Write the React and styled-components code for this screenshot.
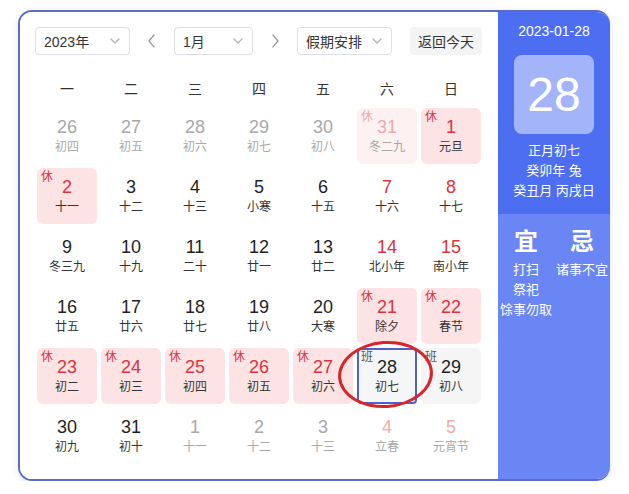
import React from 'react';
import styled, { createGlobalStyle } from 'styled-components';

const GlobalStyle = createGlobalStyle`
  body {
    margin: 0;
    background: #ffffff;
    font-family: 'Liberation Sans', 'Noto Sans CJK SC', sans-serif;
  }
`;

const Page = styled.div`
  padding: 10px 0 0 18px;
`;

const Card = styled.div`
  display: flex;
  width: 592px;
  height: 471px;
  box-sizing: border-box;
  border: 2px solid #5a6cc6;
  border-right: none;
  border-radius: 14px;
  overflow: hidden;
  box-shadow: 0 2px 6px rgba(90, 108, 198, 0.18);
`;

const Main = styled.div`
  width: 478px;
  box-sizing: border-box;
  padding: 15px 17px;
  background: #fff;
`;

const Toolbar = styled.div`
  display: flex;
  align-items: center;
  height: 28px;
  margin: 0 -1px 0 -2px;
`;

const Select = styled.div`
  display: flex;
  align-items: center;
  justify-content: space-between;
  width: ${p => p.$w}px;
  height: 28px;
  box-sizing: border-box;
  padding: 0 8px;
  border: 1px solid #dcdfe6;
  border-radius: 4px;
  font-size: 14px;
  color: #333;
`;

const Arrow = styled.div`
  display: flex;
  align-items: center;
  justify-content: center;
  width: 44px;
  color: #999;
`;

const TodayButton = styled.div`
  margin-left: auto;
  height: 28px;
  padding: 0 8px;
  display: flex;
  align-items: center;
  background: #f4f4f5;
  border-radius: 4px;
  font-size: 14px;
  color: #333;
`;

const Weekdays = styled.div`
  display: grid;
  grid-template-columns: repeat(7, 60px);
  column-gap: 4px;
  margin-top: 20px;
  height: 26px;
  align-items: center;
`;

const Weekday = styled.div`
  text-align: center;
  font-size: 14px;
  color: #333;
`;

const Grid = styled.div`
  display: grid;
  grid-template-columns: repeat(7, 60px);
  grid-auto-rows: 56px;
  gap: 4px;
  margin-top: 7px;
`;

const Cell = styled.div`
  position: relative;
  z-index: ${p => (p.$selected ? 2 : 0)};
  display: flex;
  flex-direction: column;
  align-items: center;
  justify-content: center;
  gap: 2px;
  box-sizing: border-box;
  background: ${p => p.$bg};
  border: ${p => (p.$selected ? '2px solid #4d63c9' : 'none')};
  border-radius: ${p => (p.$selected ? '4px' : '6px')};
`;

const Num = styled.div`
  font-size: 18px;
  line-height: 20px;
  color: ${p => p.$color};
`;

const Lunar = styled.div`
  font-size: 12px;
  line-height: 16px;
  color: ${p => p.$color};
`;

const Tag = styled.span`
  position: absolute;
  left: ${p => (p.$selected ? 2 : 4)}px;
  top: ${p => (p.$selected ? 0 : 2)}px;
  font-size: 12px;
  line-height: 14px;
  color: ${p => p.$color};
`;

const Ring = styled.span`
  position: absolute;
  left: -21px;
  top: -9px;
  width: 95px;
  height: 67px;
  box-sizing: border-box;
  border: 3px solid #d8252b;
  border-radius: 50%;
  transform: rotate(-4deg);
  pointer-events: none;
`;

const Panel = styled.div`
  width: 112px;
  display: flex;
  flex-direction: column;
  color: #fff;
`;

const PanelTop = styled.div`
  background: #4e6ef2;
  height: 202px;
  display: flex;
  flex-direction: column;
  align-items: center;
  padding-top: 10px;
  box-sizing: border-box;
`;

const DateText = styled.div`
  font-size: 14px;
  line-height: 18px;
`;

const DayBox = styled.div`
  margin-top: 15px;
  width: 80px;
  height: 79px;
  border-radius: 8px;
  background: #a3b4f8;
  display: flex;
  align-items: center;
  justify-content: center;
  font-size: 48px;
`;

const LunarLines = styled.div`
  margin-top: 7px;
  text-align: center;
  font-size: 13px;
  line-height: 20px;
`;

const PanelBottom = styled.div`
  flex: 1;
  background: #6a86f4;
  display: grid;
  grid-template-columns: 56px 56px;
  align-content: start;
  padding-top: 12px;
`;

const Column = styled.div`
  display: flex;
  flex-direction: column;
  align-items: center;
  font-size: 13px;
  line-height: 20px;
  white-space: nowrap;
`;

const Big = styled.div`
  font-size: 24px;
  line-height: 32px;
  font-weight: bold;
  margin-bottom: 2px;
`;

const Chevron = ({ size = 12, dir = 'down', color = '#b0b3b8' }) => {
  const d = {
    down: 'M2 4 L6 8 L10 4',
    left: 'M8 2 L3 8 L8 14',
    right: 'M4 2 L9 8 L4 14',
  }[dir];
  const h = dir === 'down' ? 12 : 16;
  return (
    <svg width={size} height={dir === 'down' ? size : size * 1.33} viewBox={`0 0 12 ${h}`} fill="none">
      <path d={d} stroke={color} strokeWidth="1.3" strokeLinecap="round" strokeLinejoin="round" />
    </svg>
  );
};

// kind: n normal, o other month, w weekend, h holiday, oh other-month holiday, ow other-month weekend, b work day
const days = [
  [26, '初四', 'o'], [27, '初五', 'o'], [28, '初六', 'o'], [29, '初七', 'o'], [30, '初八', 'o'], [31, '冬二九', 'oh'], [1, '元旦', 'h'],
  [2, '十一', 'h'], [3, '十二', 'n'], [4, '十三', 'n'], [5, '小寒', 'n'], [6, '十五', 'n'], [7, '十六', 'w'], [8, '十七', 'w'],
  [9, '冬三九', 'n'], [10, '十九', 'n'], [11, '二十', 'n'], [12, '廿一', 'n'], [13, '廿二', 'n'], [14, '北小年', 'w'], [15, '南小年', 'w'],
  [16, '廿五', 'n'], [17, '廿六', 'n'], [18, '廿七', 'n'], [19, '廿八', 'n'], [20, '大寒', 'n'], [21, '除夕', 'h'], [22, '春节', 'h'],
  [23, '初二', 'h'], [24, '初三', 'h'], [25, '初四', 'h'], [26, '初五', 'h'], [27, '初六', 'h'], [28, '初七', 'bs'], [29, '初八', 'b'],
  [30, '初九', 'n'], [31, '初十', 'n'], [1, '十一', 'o'], [2, '十二', 'o'], [3, '十三', 'o'], [4, '立春', 'ow'], [5, '元宵节', 'ow'],
];

const styles = {
  n: { bg: 'transparent', num: '#1f1f1f', lunar: '#333' },
  o: { bg: 'transparent', num: '#a8a8a8', lunar: '#a8a8a8' },
  w: { bg: 'transparent', num: '#e0323c', lunar: '#333' },
  h: { bg: '#fde3e4', num: '#e0323c', lunar: '#333', tag: '休', tagColor: '#e0323c' },
  oh: { bg: '#fef1f1', num: '#f1a9ad', lunar: '#a8a8a8', tag: '休', tagColor: '#f1a9ad' },
  ow: { bg: 'transparent', num: '#f1a9ad', lunar: '#a8a8a8' },
  b: { bg: '#f5f5f6', num: '#1f1f1f', lunar: '#333', tag: '班', tagColor: '#555' },
  bs: { bg: '#f5f6f8', num: '#1f1f1f', lunar: '#333', tag: '班', tagColor: '#555', selected: true },
};

export default function App() {
  return (
    <Page>
      <GlobalStyle />
      <Card>
        <Main>
          <Toolbar>
            <Select $w={95}>2023年<Chevron /></Select>
            <Arrow><Chevron dir="left" size={12} color="#999" /></Arrow>
            <Select $w={79}>1月<Chevron /></Select>
            <Arrow><Chevron dir="right" size={12} color="#999" /></Arrow>
            <Select $w={95}>假期安排<Chevron /></Select>
            <TodayButton>返回今天</TodayButton>
          </Toolbar>
          <Weekdays>
            {['一', '二', '三', '四', '五', '六', '日'].map(d => (
              <Weekday key={d}>{d}</Weekday>
            ))}
          </Weekdays>
          <Grid>
            {days.map(([n, l, k], i) => {
              const s = styles[k];
              return (
                <Cell key={i} $bg={s.bg} $selected={s.selected}>
                  {s.tag && <Tag $color={s.tagColor} $selected={s.selected}>{s.tag}</Tag>}
                  <Num $color={s.num}>{n}</Num>
                  <Lunar $color={s.lunar}>{l}</Lunar>
                  {s.selected && <Ring />}
                </Cell>
              );
            })}
          </Grid>
        </Main>
        <Panel>
          <PanelTop>
            <DateText>2023-01-28</DateText>
            <DayBox>28</DayBox>
            <LunarLines>
              <div>正月初七</div>
              <div>癸卯年 兔</div>
              <div>癸丑月 丙戌日</div>
            </LunarLines>
          </PanelTop>
          <PanelBottom>
            <Column>
              <Big>宜</Big>
              <div>打扫</div>
              <div>祭祀</div>
              <div>馀事勿取</div>
            </Column>
            <Column>
              <Big>忌</Big>
              <div>诸事不宜</div>
            </Column>
          </PanelBottom>
        </Panel>
      </Card>
    </Page>
  );
}
